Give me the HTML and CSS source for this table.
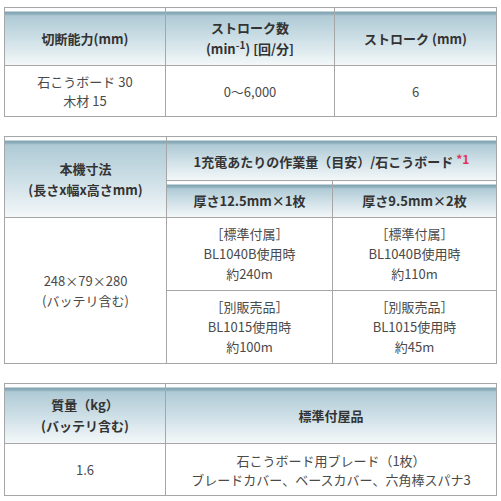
FILE: index.html
```html
<!DOCTYPE html>
<html lang="ja">
<head>
<meta charset="utf-8">
<link rel="stylesheet" href="styles.css">
</head>
<body>
<div class="page">
  <table class="spec t1">
    <colgroup><col class="c161"><col class="c169"><col class="c162"></colgroup>
    <tr class="hrow h58">
      <th>切断能力(mm)</th>
      <th>ストローク数<br>(min<sup>-1</sup>) [回/分]</th>
      <th>ストローク (mm)</th>
    </tr>
    <tr class="brow h53">
      <td>石こうボード 30<br>木材 15</td>
      <td>0～6,000</td>
      <td>6</td>
    </tr>
  </table>

  <table class="spec t2">
    <colgroup><col class="c162"><col class="c166"><col class="c164"></colgroup>
    <tr class="hrow h42">
      <th rowspan="2">本機寸法<br>(長さx幅x高さmm)</th>
      <th colspan="2">1充電あたりの作業量（目安）/石こうボード <span class="note">*1</span></th>
    </tr>
    <tr class="hrow h36">
      <th>厚さ12.5mm×1枚</th>
      <th>厚さ9.5mm×2枚</th>
    </tr>
    <tr class="brow h73">
      <td rowspan="2">248×79×280<br>(バッテリ含む)</td>
      <td>［標準付属］<br>BL1040B使用時<br>約240m</td>
      <td>［標準付属］<br>BL1040B使用時<br>約110m</td>
    </tr>
    <tr class="brow h73">
      <td>［別販売品］<br>BL1015使用時<br>約100m</td>
      <td>［別販売品］<br>BL1015使用時<br>約45m</td>
    </tr>
  </table>

  <table class="spec t3">
    <colgroup><col class="c161"><col class="c331"></colgroup>
    <tr class="hrow h57">
      <th>質量（kg）<br>(バッテリ含む)</th>
      <th>標準付屋品</th>
    </tr>
    <tr class="brow h53b">
      <td>1.6</td>
      <td>石こうボード用ブレード（1枚）<br>ブレードカバー、ベースカバー、六角棒スパナ3</td>
    </tr>
  </table>
</div>
</body>
</html>
```

FILE: styles.css
```css
html, body {
  margin: 0;
  padding: 0;
  background: #ffffff;
}
.page {
  padding: 7px 5px 0 4px;
  display: flex;
  flex-direction: column;
  gap: 19px;
  font-family: "Noto Sans CJK JP", "DejaVu Sans", sans-serif;
  color: #4a4a4a;
}
.spec {
  width: 492px;
  border-collapse: collapse;
  table-layout: fixed;
}
.c161 { width: 161px; }
.c162 { width: 162px; }
.c164 { width: 164px; }
.c166 { width: 166px; }
.c169 { width: 169px; }
.c331 { width: 331px; }
.spec th, .spec td {
  border: 1px solid #a6a6a6;
  text-align: center;
  vertical-align: middle;
  padding: 0;
}
.spec th {
  font-size: 13px;
  font-weight: bold;
  line-height: 21px;
  color: #333333;
  background: linear-gradient(to bottom, #ffffff 0, #ffffff 3px, #7fa2b0 3px, #8fb0bd 6px, #aecad5 7px, #cfe0e7 55%, #f4f8f9 100%);
  padding-top: 3px;
}
.spec td {
  font-size: 13px;
  line-height: 19px;
  color: #4a4a4a;
}
.h58 > * { height: 54px; }
.h53 > * { height: 50px; }
.h42 > * { height: 40px; }
.h36 > * { height: 33px; }
.h73 > * { height: 72px; }
.h57 > * { height: 56px; }
.h53b > * { height: 51px; }
.t2 td { line-height: 20px; }
sup {
  font-size: 10px;
  line-height: 0;
  vertical-align: 5px;
}
.note {
  color: #e0345e;
  font-size: 12px;
  vertical-align: 3px;
}
```
